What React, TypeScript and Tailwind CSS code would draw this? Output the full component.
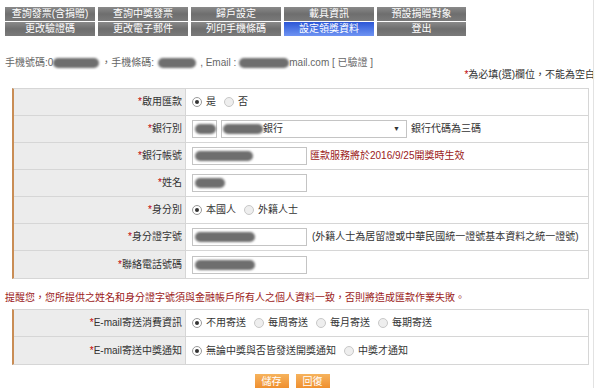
import React from 'react';

const tabsTop = ['查詢發票(含捐贈)', '查詢中獎發票', '歸戶設定', '載具資訊', '預設捐贈對象'];
const tabsBottom = ['更改驗證碼', '更改電子郵件', '列印手機條碼', '設定領獎資料', '登出'];

function Blob({ w, className = '' }: { w: string; className?: string }) {
  return <span className={`inline-block h-[10px] rounded-full bg-[#6e6e6e] blur-[1.2px] ${w} ${className}`} />;
}

function Radio({ checked, label }: { checked?: boolean; label: string }) {
  return (
    <span className="mr-[8px] inline-flex items-center gap-[4px]">
      <span
        className={`flex h-[10px] w-[10px] items-center justify-center rounded-full border ${
          checked ? 'border-[#9a9a9a] bg-white' : 'border-[#c8c8c8] bg-[#eeeeee]'
        }`}
      >
        {checked && <span className="h-[4px] w-[4px] rounded-full bg-[#333]" />}
      </span>
      <span>{label}</span>
    </span>
  );
}

function Input({ w, children }: { w: string; children?: React.ReactNode }) {
  return (
    <span className={`flex h-[18px] shrink-0 items-center border border-[#c4c4c4] bg-white pl-[2px] ${w}`}>
      {children}
    </span>
  );
}

function Row({ label, last, children }: { label: string; last?: boolean; children: React.ReactNode }) {
  return (
    <div className={`grid h-[27px] grid-cols-[172px_1fr] ${last ? '' : 'border-b border-[#d6d6d6]'}`}>
      <div className="flex items-center justify-end border-r border-[#d6d6d6] bg-[#ececec] pr-[3px]">
        <span className="text-[#c00000]">*</span>
        {label}
      </div>
      <div className="flex items-center whitespace-nowrap pl-[6px]">{children}</div>
    </div>
  );
}

export default function App() {
  return (
    <main
      className="relative flex h-[388px] w-[600px] flex-col overflow-hidden bg-white text-[10px] leading-[12px] text-[#333]"
      style={{ fontFamily: '"Liberation Sans", "Noto Sans CJK TC", sans-serif' }}
    >
      {/* right page edge */}
      <div className="absolute right-[6px] top-0 h-full w-px bg-[#e2e2e2]" />

      {/* tab menu */}
      <nav className="ml-[5px] mt-[7px] grid grid-cols-[90px_90px_90px_90px_89px] gap-x-[3px] gap-y-px">
        {[...tabsTop, ...tabsBottom].map((t) => (
          <div
            key={t}
            className={`h-[14px] text-center text-[10px] leading-[14px] text-white ${
              t === '設定領獎資料'
                ? 'bg-gradient-to-b from-[#2c56d6] to-[#6f93f2]'
                : 'bg-gradient-to-b from-[#8a8a8a] via-[#6e6e6e] to-[#7a7a7a]'
            }`}
          >
            {t}
          </div>
        ))}
      </nav>

      {/* account info */}
      <div className="ml-[5px] mt-[21px] flex h-[12px] items-center text-[#666]">
        <span>手機號碼:0</span>
        <Blob w="w-[46px]" />
        <span className="ml-[2px]">，手機條碼:</span>
        <Blob w="w-[38px]" className="ml-[4px]" />
        <span className="ml-[4px]">, Email :</span>
        <Blob w="w-[50px]" className="ml-[3px]" />
        <span>mail.com [ 已驗證 ]</span>
      </div>
      <div className="mr-[5px] flex h-[12px] justify-end text-[#333]">
        <span className="text-[#c00000]">*</span>為必填(選)欄位，不能為空白
      </div>

      {/* bank form */}
      <section className="ml-[12px] mt-[7px] w-[577px] border border-l-2 border-[#d6d6d6] border-l-[#c98d55]">
        <Row label="啟用匯款">
          <Radio checked label="是" />
          <Radio label="否" />
        </Row>
        <Row label="銀行別">
          <Input w="w-[25px]">
            <Blob w="w-[30px]" />
          </Input>
          <span className="ml-[4px] flex h-[18px] w-[186px] items-center border border-[#c4c4c4] bg-white pl-[1px]">
            <Blob w="w-[40px]" />
            <span>銀行</span>
            <span className="ml-auto mr-[6px] text-[7px]">▼</span>
          </span>
          <span className="ml-[4px]">銀行代碼為三碼</span>
        </Row>
        <Row label="銀行帳號">
          <Input w="w-[115px]">
            <Blob w="w-[58px]" />
          </Input>
          <span className="ml-[3px] text-[#9b1a1a]">匯款服務將於2016/9/25開獎時生效</span>
        </Row>
        <Row label="姓名">
          <Input w="w-[115px]">
            <Blob w="w-[30px]" />
          </Input>
        </Row>
        <Row label="身分別">
          <Radio checked label="本國人" />
          <Radio label="外籍人士" />
        </Row>
        <Row label="身分證字號">
          <Input w="w-[115px]">
            <Blob w="w-[60px]" />
          </Input>
          <span className="ml-[5px]">(外籍人士為居留證或中華民國統一證號基本資料之統一證號)</span>
        </Row>
        <Row label="聯絡電話號碼" last>
          <Input w="w-[115px]">
            <Blob w="w-[60px]" />
          </Input>
        </Row>
      </section>

      <p className="ml-[5px] mt-[13px] h-[12px] text-[#9b1a1a]">
        提醒您，您所提供之姓名和身分證字號須與金融帳戶所有人之個人資料一致，否則將造成匯款作業失敗。
      </p>

      {/* email settings */}
      <section className="ml-[12px] mt-[5px] w-[577px] border border-l-2 border-[#d6d6d6] border-l-[#c98d55]">
        <Row label="E-mail寄送消費資訊">
          <Radio checked label="不用寄送" />
          <Radio label="每周寄送" />
          <Radio label="每月寄送" />
          <Radio label="每期寄送" />
        </Row>
        <Row label="E-mail寄送中獎通知" last>
          <Radio checked label="無論中獎與否皆發送開獎通知" />
          <Radio label="中獎才通知" />
        </Row>
      </section>

      <div className="mt-[9px] flex justify-center gap-[7px] pr-[16px]">
        <button className="h-[16px] w-[34px] bg-gradient-to-b from-[#f6b35c] to-[#ee8a25] text-[10px] leading-[16px] text-white">
          儲存
        </button>
        <button className="h-[16px] w-[34px] bg-gradient-to-b from-[#f6b35c] to-[#ee8a25] text-[10px] leading-[16px] text-white">
          回復
        </button>
      </div>
    </main>
  );
}
